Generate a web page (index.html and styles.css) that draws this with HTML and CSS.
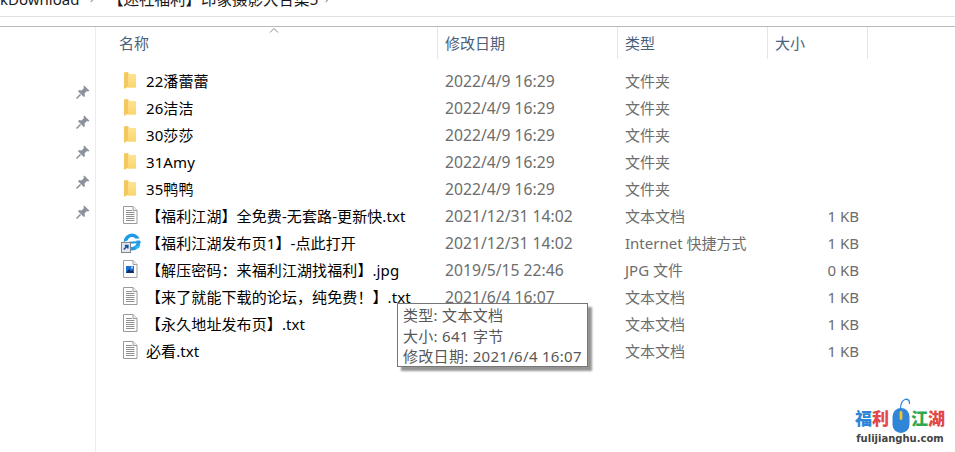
FILE: index.html
```html
<!DOCTYPE html>
<html lang="zh-CN">
<head>
<meta charset="utf-8">
<title>文件资源管理器</title>
<link rel="stylesheet" href="styles.css">
</head>
<body>
<svg class="defs" width="0" height="0" aria-hidden="true">
  <defs>
    <linearGradient id="fold" x1="0" y1="0" x2="0" y2="1"><stop offset="0" stop-color="#fde391"/><stop offset="1" stop-color="#fbd56e"/></linearGradient>
    <symbol id="folder" viewBox="0 0 16 18">
      <path d="M1 1.5 H5.5 L7 3 H13 V16.5 H1 Z" fill="#fde08f"/>
      <path d="M5 3 H13 V16.5 H5 Z" fill="url(#fold)"/>
      <path d="M1 1.5 L5 1 V15.5 L1 18 Z" fill="#f3c863"/>
    </symbol>
    <symbol id="doc" viewBox="0 0 16 18">
      <path d="M.5 .5 H10 L14 4.5 V17.5 H.5 Z" fill="#fff" stroke="#9a9a9a"/>
      <path d="M10 .5 V4.5 H14" fill="#eee" stroke="#9a9a9a"/>
      <path d="M3 4.5 H9 M3 6.5 H11.5 M3 8.5 H11.5 M3 10.5 H11.5 M3 12.5 H11.5 M3 14.5 H11.5" stroke="#8f8f8f" fill="none"/>
    </symbol>
    <symbol id="image" viewBox="0 0 16 18">
      <path d="M.5 .5 H10 L14 4.5 V17.5 H.5 Z" fill="#fff" stroke="#a0a0a0"/>
      <path d="M10 .5 V4.5 H14" fill="#eee" stroke="#a0a0a0"/>
      <rect x="3" y="6" width="8" height="7" fill="#1f6fd0"/>
      <path d="M3 13 L6 9 L8 11 L9.5 10 L11 13 Z" fill="#0b2c66"/>
      <rect x="8" y="6.5" width="2" height="2" fill="#9fd0ff"/>
    </symbol>
    <symbol id="link" viewBox="0 0 20 20">
      <ellipse cx="11" cy="9" rx="6.5" ry="6.8" fill="none" stroke="#1e9be6" stroke-width="3.6"/>
      <path d="M0 11.5 C6 8 13 6 20 6.5" fill="none" stroke="#fff" stroke-width="2"/>
      <path d="M2 11 C7 8.5 13 8 19.5 8.5 L19.5 10.5 C14 10 8 10.5 3.5 12.5 Z" fill="#1e9be6"/>
      <path d="M14 13.5 L19.5 12 L18 15 L14.5 16 Z" fill="#35b5f0"/>
      <rect x=".5" y="9.5" width="9" height="10" fill="#e4e8ee" stroke="#7f858e"/>
      <path d="M2.8 16.5 L6 13.2 M3.8 12.6 H6.8 V15.6" fill="none" stroke="#1b4f9e" stroke-width="1.6"/>
    </symbol>
    <symbol id="pin" viewBox="0 0 16 16">
      <path d="M9.2 1.5 L14.5 6.8 L13.2 7.6 L12 7 L9.5 9.5 L10 12 L8.8 13 L3 7.2 L4 6 L6.5 6.5 L9 4 L8.4 2.8 Z" fill="#8b929b"/>
      <path d="M5.5 10.5 L1.5 14.5" stroke="#8b929b" stroke-width="1.6"/>
    </symbol>
  </defs>
</svg>

<div class="address">
  <span class="crumb-a">kDownload</span>
  <span class="chev">›</span>
  <span class="crumb-b">【迷社福利】印象摄影大合集5</span>
  <span class="chev">›</span>
</div>
<div class="toolbar-gap"></div>

<div class="main">
  <aside class="side">
    <svg class="pin"><use href="#pin"/></svg>
    <svg class="pin"><use href="#pin"/></svg>
    <svg class="pin"><use href="#pin"/></svg>
    <svg class="pin"><use href="#pin"/></svg>
    <svg class="pin"><use href="#pin"/></svg>
  </aside>

  <section class="list">
    <div class="head">
      <div class="hcell hname">名称<svg class="sort" viewBox="0 0 10 5"><path d="M1 4.5 L5 .5 L9 4.5" fill="none" stroke="#8a8a8a"/></svg></div>
      <div class="hcell hdate">修改日期</div>
      <div class="hcell htype">类型</div>
      <div class="hcell hsize">大小</div>
    </div>
    <div class="rows">
      <div class="row"><div class="name"><svg class="ico"><use href="#folder"/></svg>22潘蕾蕾</div><div class="date">2022/4/9 16:29</div><div class="type">文件夹</div><div class="size"></div></div>
      <div class="row"><div class="name"><svg class="ico"><use href="#folder"/></svg>26洁洁</div><div class="date">2022/4/9 16:29</div><div class="type">文件夹</div><div class="size"></div></div>
      <div class="row"><div class="name"><svg class="ico"><use href="#folder"/></svg>30莎莎</div><div class="date">2022/4/9 16:29</div><div class="type">文件夹</div><div class="size"></div></div>
      <div class="row"><div class="name"><svg class="ico"><use href="#folder"/></svg>31Amy</div><div class="date">2022/4/9 16:29</div><div class="type">文件夹</div><div class="size"></div></div>
      <div class="row"><div class="name"><svg class="ico"><use href="#folder"/></svg>35鸭鸭</div><div class="date">2022/4/9 16:29</div><div class="type">文件夹</div><div class="size"></div></div>
      <div class="row"><div class="name"><svg class="ico"><use href="#doc"/></svg>【福利江湖】全免费-无套路-更新快.txt</div><div class="date">2021/12/31 14:02</div><div class="type">文本文档</div><div class="size">1 KB</div></div>
      <div class="row"><div class="name"><svg class="ico ico-link"><use href="#link"/></svg>【福利江湖发布页1】-点此打开</div><div class="date">2021/12/31 14:02</div><div class="type">Internet 快捷方式</div><div class="size">1 KB</div></div>
      <div class="row"><div class="name"><svg class="ico"><use href="#image"/></svg>【解压密码：来福利江湖找福利】.jpg</div><div class="date">2019/5/15 22:46</div><div class="type">JPG 文件</div><div class="size">0 KB</div></div>
      <div class="row"><div class="name"><svg class="ico"><use href="#doc"/></svg>【来了就能下载的论坛，纯免费！】.txt</div><div class="date">2021/6/4 16:07</div><div class="type">文本文档</div><div class="size">1 KB</div></div>
      <div class="row"><div class="name"><svg class="ico"><use href="#doc"/></svg>【永久地址发布页】.txt</div><div class="date">2021/6/4 16:07</div><div class="type">文本文档</div><div class="size">1 KB</div></div>
      <div class="row"><div class="name"><svg class="ico"><use href="#doc"/></svg>必看.txt</div><div class="date">2021/6/4 16:07</div><div class="type">文本文档</div><div class="size">1 KB</div></div>
    </div>
  </section>
</div>

<div class="tooltip">
  <div>类型: 文本文档</div>
  <div>大小: 641 字节</div>
  <div>修改日期: 2021/6/4 16:07</div>
</div>

<div class="logo">
  <div class="logo-top">
    <span class="c-blue">福</span><span class="c-red">利</span>
    <svg class="mouse" viewBox="0 0 18 35"><path d="M8.5 11 C8.5 6 10 2.5 13 1.5 C16 .5 18 3 17.5 6" fill="none" stroke="#2f86d8" stroke-width="1.3"/><rect x=".5" y="10" width="17" height="25" rx="8.5" fill="#2f86d8"/><rect x="7.6" y="13" width="2.8" height="9" rx="1.4" fill="#f2c230"/></svg>
    <span class="c-green">江</span><span class="c-red">湖</span>
  </div>
  <div class="logo-url">fulijianghu.com</div>
</div>
</body>
</html>
```

FILE: styles.css
```css
* { box-sizing: border-box; }
html, body { margin: 0; padding: 0; height: 100%; }
body {
  position: relative;
  width: 955px;
  height: 452px;
  overflow: hidden;
  background: #fff;
  font-family: "Noto Sans", "Noto Sans CJK SC", sans-serif;
  font-size: 15px;
}
.defs { position: absolute; }

.address {
  height: 17px;
  padding-bottom: 7px;
  display: flex;
  align-items: flex-end;
  white-space: nowrap;
  line-height: 20px;
  color: #1a1a1a;
  border-bottom: 1px solid #e0e0e0;
}
.crumb-a { width: 90px; flex: none; }
.chev { width: 18px; flex: none; color: #8a8a8a; font-size: 12px; }
.crumb-b { width: 217px; flex: none; font-size: 15.5px; }
.toolbar-gap { height: 10px; border-bottom: 1px solid #b9b9b9; }

.main { display: flex; height: 425px; }
.side {
  width: 96px;
  flex: none;
  border-right: 1px solid #ececec;
  padding: 57px 0 0 75px;
  display: flex;
  flex-direction: column;
  gap: 14px;
}
.pin { width: 16px; height: 16px; display: block; }

.list { flex: 1; min-width: 0; }
.head {
  display: grid;
  grid-template-columns: 342px 180px 150px 100px;
  height: 32px;
}
.hcell {
  color: #4c607a;
  line-height: 32px;
  padding-left: 7px;
  border-right: 1px solid #e5e5e5;
  position: relative;
}
.hname { padding-left: 23px; }
.sort { position: absolute; left: 173px; top: 1px; width: 10px; height: 5px; }

.rows { padding-top: 9px; }
.row {
  display: grid;
  grid-template-columns: 342px 180px 150px 91px;
  height: 27px;
  line-height: 27px;
  color: #6d6d6d;
  white-space: nowrap;
}
.name {
  display: flex;
  align-items: center;
  padding-left: 27px;
  color: #000;
  letter-spacing: .1px;
}
.ico { width: 16px; height: 18px; margin: -3px 7px 0 0; flex: none; }
.ico-link { width: 20px; height: 20px; margin: -1px 5px 0 -2px; }
.date { padding-left: 7px; font-size: 15.7px; }
.type { padding-left: 7px; }
.size { text-align: right; }

.tooltip {
  position: absolute;
  left: 397px;
  top: 303px;
  width: 191px;
  height: 64px;
  padding: 1px 5px;
  border: 1px solid #767676;
  background: #fff;
  color: #575757;
  font-size: 15px;
  letter-spacing: .3px;
  line-height: 20.5px;
  white-space: nowrap;
  box-shadow: 4px 4px 2px rgba(0, 0, 0, .42);
}

.logo {
  position: absolute;
  left: 855px;
  top: 398px;
  width: 90px;
  font-family: "Noto Sans CJK SC", sans-serif;
  text-align: center;
}
.logo-top {
  display: flex;
  align-items: flex-end;
  justify-content: center;
  height: 35px;
  font-size: 17px;
  font-weight: 900;
  line-height: 30px;
}
.mouse { width: 18px; height: 35px; flex: none; margin: 0 1px 0 3px; }
.c-blue { color: #2f86d8; }
.c-red { color: #e2484a; }
.c-green { color: #2fa84f; }
.logo-url {
  font-family: "DejaVu Sans", sans-serif;
  font-size: 10px;
  font-weight: 700;
  line-height: 11px;
  color: #444;
  white-space: nowrap;
}
```
